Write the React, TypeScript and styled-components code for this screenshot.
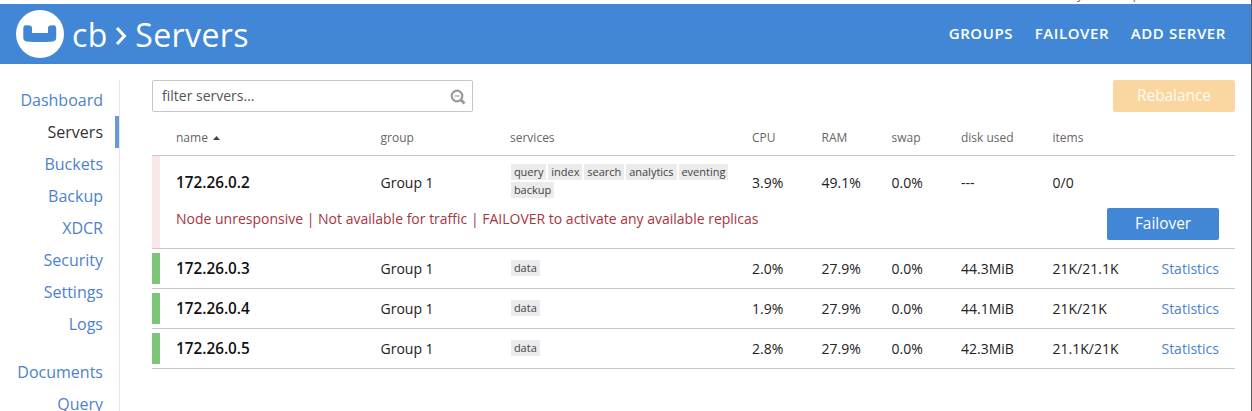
import React from 'react';
import styled, { createGlobalStyle } from 'styled-components';

const Global = createGlobalStyle`
  * { box-sizing: border-box; }
  html, body { margin: 0; padding: 0; background: #fff; overflow: hidden; }
  body { font-family: "Open Sans", "Noto Sans", sans-serif; font-size: 14px; color: #222; }
`;

const Page = styled.div`
  width: 1252px;
  height: 411px;
  overflow: hidden;
  border-right: 1px solid #5a5a5a;
  display: flex;
  flex-direction: column;
`;

const TopStrip = styled.div`
  flex: 0 0 4px;
  height: 4px;
  overflow: hidden;
  display: flex;
  justify-content: flex-end;
  align-items: flex-end;
  gap: 31px;
  padding: 0 111px 1px 0;
  font-size: 12px;
  line-height: 16px;
  color: #666;
`;

const Header = styled.header`
  flex: 0 0 60px;
  background: #4287d6;
  color: #fff;
  display: flex;
  align-items: center;
  padding: 0 25px 0 16px;
`;

const Logo = styled.svg`
  width: 48px;
  height: 48px;
  flex: none;
  display: block;
`;

const Title = styled.h1`
  margin: 0 0 0 8px;
  padding-top: 1px;
  font-size: 32px;
  line-height: 44px;
  font-weight: 400;
  letter-spacing: 0.4px;
  display: flex;
  align-items: center;
`;

const Chevron = styled.svg`
  width: 12px;
  height: 20px;
  margin: 2px 8px 0 7.5px;
`;

const Actions = styled.nav`
  margin-left: auto;
  padding-bottom: 2px;
  display: flex;
  gap: 21.5px;
`;

const Action = styled.a`
  font-size: 15px;
  line-height: 20px;
  font-weight: 600;
  letter-spacing: 0.6px;
  white-space: nowrap;
`;

const Body = styled.div`
  flex: 1;
  min-height: 0;
  display: flex;
  padding: 16px 16px 0 0;
`;

const Sidebar = styled.nav`
  flex: 0 0 120px;
  border-right: 1px solid #e6e6e6;
  padding-top: 4px;
  height: 340px;
`;

const NavItem = styled.a<{ $active?: boolean; $spaced?: boolean }>`
  display: block;
  height: 32px;
  line-height: 32px;
  margin-top: ${(p) => (p.$spaced ? '16px' : '0')};
  padding-right: ${(p) => (p.$active ? '12px' : '16px')};
  border-right: ${(p) => (p.$active ? '4px solid #6699d8' : '0')};
  text-align: right;
  font-size: 16px;
  color: ${(p) => (p.$active ? '#333' : '#4d82cb')};
`;

const Main = styled.main`
  flex: 1;
  min-width: 0;
  margin-left: 32px;
`;

const Toolbar = styled.div`
  display: flex;
  justify-content: space-between;
  height: 32px;
`;

const Filter = styled.div`
  width: 321px;
  height: 32px;
  border: 1px solid #c6c6c6;
  border-radius: 2px;
  display: flex;
  align-items: center;
  justify-content: space-between;
  padding: 0 6px 1px 9px;
  font-size: 14px;
  color: #555;
`;

const SearchIcon = styled.svg`
  width: 16px;
  height: 16px;
  margin-top: 2px;
`;

const Button = styled.button<{ $muted?: boolean }>`
  width: ${(p) => (p.$muted ? '122px' : '112px')};
  height: 32px;
  margin-top: ${(p) => (p.$muted ? '0' : '-2px')};
  border: 0;
  border-radius: 2px;
  padding: 0;
  background: ${(p) => (p.$muted ? '#fad7a0' : '#4287d6')};
  color: ${(p) => (p.$muted ? '#fffaf0' : '#fff')};
  font-family: inherit;
  font-size: 15.4px;
  line-height: 32px;
`;

const columns = '204.5px 129.5px 242px 69.5px 70px 69.5px 91.5px 1fr auto';

const HeadRow = styled.div`
  display: grid;
  grid-template-columns: ${columns};
  height: 44px;
  padding: 16px 16px 0 24px;
  line-height: 20px;
  font-size: 12px;
  color: #666;
  border-bottom: 1px solid #c8c8c8;
`;

const SortCaret = styled.svg`
  width: 7px;
  height: 4px;
  margin: 0 0 2px 5px;
`;

const Node = styled.section<{ $failed?: boolean }>`
  display: flex;
  height: ${(p) => (p.$failed ? '93px' : '40px')};
  border-bottom: 1px solid #c8c8c8;
  &::before {
    content: '';
    flex: 0 0 8px;
    margin: ${(p) => (p.$failed ? '0' : '4px 0')};
    background: ${(p) => (p.$failed ? '#f9e7e9' : '#7dc578')};
  }
`;

const NodeContent = styled.div`
  flex: 1;
  padding: 0 16px;
`;

const NodeRow = styled.div<{ $tall?: boolean }>`
  display: grid;
  grid-template-columns: ${columns};
  align-items: center;
  height: ${(p) => (p.$tall ? '54px' : '39px')};
  line-height: 20px;
`;

const Name = styled.span`
  padding-bottom: 2px;
  font-size: 15.3px;
  font-weight: 600;
  color: #111;
`;

const Tags = styled.div<{ $raised?: boolean }>`
  width: 232px;
  display: flex;
  flex-wrap: wrap;
  gap: 2px;
  padding-left: 1px;
  margin-top: ${(p) => (p.$raised ? '-4px' : '-1px')};
`;

const Tag = styled.span`
  height: 16px;
  line-height: 15px;
  padding: 0 2.900px;
  font-size: 11px;
  color: #444;
  background: #ebebeb;
`;

const Link = styled.a`
  color: #4d82cb;
`;

const AlertRow = styled.div`
  display: flex;
  justify-content: space-between;
  color: #a93440;
`;

const AlertText = styled.span`
  line-height: 20px;
  margin-top: -1px;
`;

const primaryNav = ['Dashboard', 'Servers', 'Buckets', 'Backup', 'XDCR', 'Security', 'Settings', 'Logs'];

const servers = [
  { name: '172.26.0.2', services: ['query', 'index', 'search', 'analytics', 'eventing', 'backup'], cpu: '3.9%', ram: '49.1%', disk: '---', items: '0/0', failed: true },
  { name: '172.26.0.3', services: ['data'], cpu: '2.0%', ram: '27.9%', disk: '44.3MiB', items: '21K/21.1K', failed: false },
  { name: '172.26.0.4', services: ['data'], cpu: '1.9%', ram: '27.9%', disk: '44.1MiB', items: '21K/21K', failed: false },
  { name: '172.26.0.5', services: ['data'], cpu: '2.8%', ram: '27.9%', disk: '42.3MiB', items: '21.1K/21K', failed: false },
];

export default function App() {
  return (
    <Page>
      <Global />
      <TopStrip>
        <span>Activity</span>
        <span>Help</span>
      </TopStrip>
      <Header>
        <Logo viewBox="0 0 48 48">
          <circle cx="24" cy="24" r="24" fill="#fff" />
          <path d="M9.500 15.300Q7.300 15.500 7.300 18.500V28Q7.300 31 10.500 31.400Q24 32.600 37 31.400Q40.200 31 40.200 28V18.500Q40.200 15.500 38 15.300L34 15.500Q32 15.800 32 17.800V23H16V17.800Q16 15.800 14 15.500Z" fill="#4287d6" />
        </Logo>
        <Title>
          cb
          <Chevron viewBox="0 0 12 20">
            <path d="M2 2l7.500 8L2 18" fill="none" stroke="#fff" strokeWidth="3" />
          </Chevron>
          Servers
        </Title>
        <Actions>
          <Action>GROUPS</Action>
          <Action>FAILOVER</Action>
          <Action>ADD SERVER</Action>
        </Actions>
      </Header>
      <Body>
        <Sidebar>
          {primaryNav.map((n) => (
            <NavItem key={n} $active={n === 'Servers'}>{n}</NavItem>
          ))}
          <NavItem $spaced>Documents</NavItem>
          <NavItem>Query</NavItem>
        </Sidebar>
        <Main>
          <Toolbar>
            <Filter>
              filter servers...
              <SearchIcon viewBox="0 0 16 16" fill="none" stroke="#999">
                <circle cx="7" cy="7" r="5.300" strokeWidth="2.200" />
                <path d="M10.800 10.800l3.700 3.700" strokeWidth="2.800" />
                <path d="M4.500 7h5" strokeWidth="1.200" />
              </SearchIcon>
            </Filter>
            <Button $muted>Rebalance</Button>
          </Toolbar>
          <HeadRow>
            <span>
              name
              <SortCaret viewBox="0 0 7 4"><path d="M0 4L3.500 0L7 4z" fill="#444" /></SortCaret>
            </span>
            <span>group</span>
            <span>services</span>
            <span>CPU</span>
            <span>RAM</span>
            <span>swap</span>
            <span>disk used</span>
            <span>items</span>
          </HeadRow>
          {servers.map((s) => (
            <Node key={s.name} $failed={s.failed}>
              <NodeContent>
                <NodeRow $tall={s.failed}>
                  <Name>{s.name}</Name>
                  <span>Group 1</span>
                  <Tags $raised={s.failed}>{s.services.map((t) => <Tag key={t}>{t}</Tag>)}</Tags>
                  <span>{s.cpu}</span>
                  <span>{s.ram}</span>
                  <span>0.0%</span>
                  <span>{s.disk}</span>
                  <span>{s.items}</span>
                  {!s.failed && <Link>Statistics</Link>}
                </NodeRow>
                {s.failed && (
                  <AlertRow>
                    <AlertText>Node unresponsive | Not available for traffic | FAILOVER to activate any available replicas</AlertText>
                    <Button>Failover</Button>
                  </AlertRow>
                )}
              </NodeContent>
            </Node>
          ))}
        </Main>
      </Body>
    </Page>
  );
}
